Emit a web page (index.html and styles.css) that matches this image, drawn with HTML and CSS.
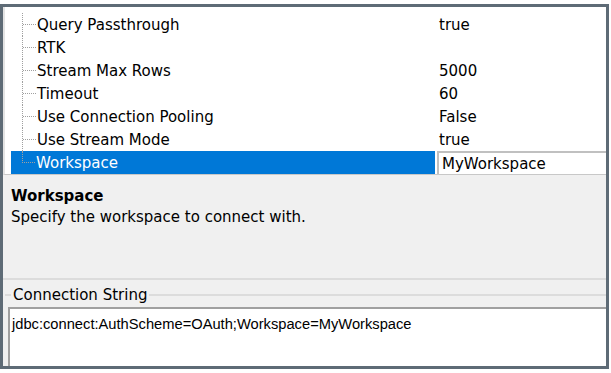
FILE: index.html
```html
<!DOCTYPE html>
<html lang="en">

<head>
    <meta charset="UTF-8">
    <title>Connection Properties</title>
    <link rel="stylesheet" href="styles.css">
</head>

<body>
    <div class="frame">
        <div class="grid">
            <div class="row">
                <div class="name"><span class="branch"></span>Query Passthrough</div>
                <div class="value">true</div>
            </div>
            <div class="row">
                <div class="name"><span class="branch"></span>RTK</div>
                <div class="value"></div>
            </div>
            <div class="row">
                <div class="name"><span class="branch"></span>Stream Max Rows</div>
                <div class="value">5000</div>
            </div>
            <div class="row">
                <div class="name"><span class="branch"></span>Timeout</div>
                <div class="value">60</div>
            </div>
            <div class="row">
                <div class="name"><span class="branch"></span>Use Connection Pooling</div>
                <div class="value">False</div>
            </div>
            <div class="row">
                <div class="name"><span class="branch"></span>Use Stream Mode</div>
                <div class="value">true</div>
            </div>
            <div class="row selected last">
                <div class="name"><span class="branch"></span>Workspace</div>
                <div class="value"><span class="editor">MyWorkspace</span></div>
            </div>
        </div>

        <div class="description">
            <h3>Workspace</h3>
            <p>Specify the workspace to connect with.</p>
        </div>

        <fieldset class="conn">
            <legend>Connection String</legend>
            <div class="conn-text">jdbc:connect:AuthScheme=OAuth;Workspace=MyWorkspace</div>
        </fieldset>
    </div>
</body>

</html>
```

FILE: styles.css
```css
body {
    margin: 0;
    background: #ffffff;
    font-family: "DejaVu Sans", sans-serif;
    font-size: 15px;
    color: #000000;
}

.frame {
    width: 603px;
    height: 359px;
    margin-top: 4px;
    border: 3px solid #5e6b76;
    background: #f0f0f0;
    display: flex;
    flex-direction: column;
}

.grid {
    background: #ffffff;
    border-left: 2px solid #e3e3e3;
    padding: 6px 0 0 6px;
    border-bottom: 1px solid #c8c8c8;
}

.row {
    display: flex;
    height: 23px;
}

.name {
    width: 424px;
    display: flex;
    align-items: center;
    white-space: nowrap;
}

.branch {
    align-self: stretch;
    width: 13px;
    margin: 0 1px 0 11px;
    border-left: 1px dotted #a0a0a0;
}

.branch::after {
    content: "";
    display: block;
    height: 11px;
    border-bottom: 1px dotted #a0a0a0;
}

.last .branch {
    border-left: none;
}

.last .branch::after {
    border-left: 1px dotted #a0a0a0;
}

.value {
    flex: 1;
    display: flex;
    align-items: center;
    padding-left: 4px;
}

.selected .name {
    background: #0078d7;
    color: #ffffff;
}

.selected .value {
    padding: 0 0 0 2px;
    align-items: stretch;
}

.editor {
    flex: 1;
    display: flex;
    align-items: center;
    padding-left: 3px;
    background: #ffffff;
    border-top: 2px solid #c0c0c0;
    border-left: 2px solid #c0c0c0;
}

.description {
    height: 103px;
    padding: 0 8px;
    border-bottom: 2px solid #dcdcdc;
}

.description h3 {
    margin: 12px 0 3px;
    font-size: 15px;
}

.description p {
    margin: 0;
}

.conn {
    flex: 1;
    margin: 6px 0 0 2px;
    padding: 0;
    border: none;
    border-top: 2px solid #dcdcdc;
    display: flex;
    flex-direction: column;
}

.conn legend {
    margin-left: 6px;
    padding: 0 2px;
}

.conn-text {
    flex: 1;
    margin-left: 3px;
    margin-top: 3px;
    padding: 7px 2px;
    background: #ffffff;
    border-top: 2px solid #a0a0a0;
    border-left: 2px solid #a0a0a0;
    font-family: "Liberation Sans", sans-serif;
    font-size: 14.7px;
}
```
